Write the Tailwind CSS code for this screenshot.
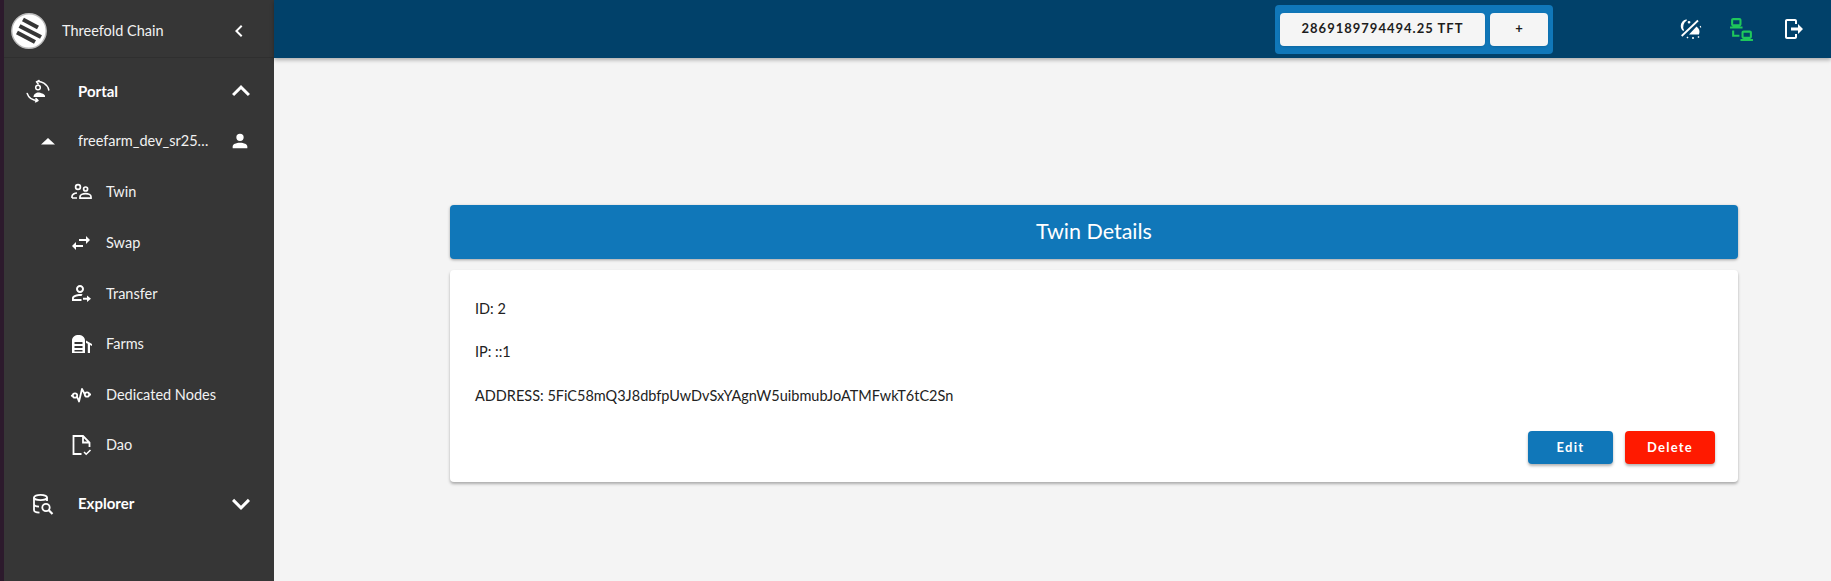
<!DOCTYPE html>
<html>
<head>
<meta charset="utf-8">
<script src="https://cdn.jsdelivr.net/npm/@tailwindcss/browser@4"></script>
</head>
<body class="bg-[#f4f4f4] font-['Lato','Noto_Sans',sans-serif] overflow-hidden">
<div class="flex h-[581px] w-[1831px]">
  <div class="w-[4px] shrink-0 bg-[#2c1a2c]"></div>
  <aside class="w-[270px] shrink-0 bg-[#363636] text-white flex flex-col">
    <div class="h-[58px] flex items-center border-b border-[#2f2f2f] pl-[7px] pr-[23px] pt-[5px]">
      <svg class="w-[36px] h-[36px] shrink-0" viewBox="-18 -18 36 36"><circle cx="0" cy="0" r="17.200" fill="#fff" stroke="#bdbdbd" stroke-width="1.400"/><g stroke="#363636" stroke-width="4.200"><path d="M-6 -11.500L9 -3.500"/><path d="M-9.500 -5L12 6"/><path d="M-12 1.500L6 11"/></g></svg>
      <span class="ml-[15px] text-[14.500px] text-[#f2f2f2]">Threefold Chain</span>
      <svg class="ml-auto w-[24px] h-[24px]" viewBox="0 0 24 24" fill="#fff"><path d="M15.41,16.58L10.83,12L15.41,7.41L14,6L8,12L14,18L15.41,16.58Z"/></svg>
    </div>
    <nav class="pt-[8px] flex flex-col">
      <div class="h-[50px] flex items-center pl-[22px] pr-[15px]">
        <svg class="w-[24px] h-[24px] shrink-0" viewBox="0 0 24 24" fill="none" stroke="#fff" stroke-width="1.500"><circle cx="12" cy="8.500" r="2.300"/><path d="M7.500 18c0-2.800 2.800-4.500 4.800-4.500s6.700 1.700 6.700 3.500v1z" fill="#fff" stroke="none"/><path d="M10.500 2.800C15 1.500 21.500 5 22.800 11M10.500 2.800l2.600-1.300M10.500 2.800l1.700 2.200M1.200 14.500C2.500 18.500 6.500 21.500 12 21.500M12 21.500l-2.500 1.300M12 21.500l-2-2" stroke-linecap="round"/></svg>
        <span class="ml-[28px] text-[15px] font-bold">Portal</span>
        <svg class="ml-auto w-[36px] h-[36px]" viewBox="0 0 24 24" fill="#fff"><path d="M7.41,15.41L12,10.83L16.59,15.41L18,14L12,8L6,14L7.41,15.41Z"/></svg>
      </div>
      <div class="h-[50px] flex items-center pl-[32px] pr-[23px]">
        <svg class="w-[24px] h-[24px] shrink-0" viewBox="0 0 24 24" fill="#fff"><path d="M5,15.500L12,9L19,15.500H5Z"/></svg>
        <span class="ml-[18px] text-[14.500px] text-[#f2f2f2] w-[131px] truncate">freefarm_dev_sr25519</span>
        <svg class="ml-auto w-[22px] h-[22px]" viewBox="0 0 24 24" fill="#fff"><path d="M12,4A4,4 0 0,1 16,8A4,4 0 0,1 12,12A4,4 0 0,1 8,8A4,4 0 0,1 12,4M12,14C16.42,14 20,15.79 20,18V20H4V18C4,15.79 7.58,14 12,14Z"/></svg>
      </div>
      <div class="h-[50.600px] mt-[1px] flex items-center pl-[65px]">
        <svg class="w-[24px] h-[24px] shrink-0" viewBox="0 0 24 24" fill="none" stroke="#fff" stroke-width="1.700"><circle cx="9" cy="7" r="2.400"/><circle cx="16.600" cy="9" r="2"/><path d="M3 18v-1.600C3 14.600 5.500 13 8 13M3 18h5M11 18.200v-1.500c0-1.800 2.800-3 5.600-3s5.400 1.200 5.400 3v1.500z"/></svg>
        <span class="ml-[13px] text-[14.500px] text-[#f2f2f2]">Twin</span>
      </div>
      <div class="h-[50.600px] flex items-center pl-[65px]">
        <svg class="w-[24px] h-[24px] shrink-0" viewBox="0 0 24 24" fill="#fff"><path d="M21,9L17,5V8H10V10H17V13M7,11L3,15L7,19V16H14V14H7V11Z"/></svg>
        <span class="ml-[13px] text-[14.500px] text-[#f2f2f2]">Swap</span>
      </div>
      <div class="h-[50.600px] flex items-center pl-[65px]">
        <svg class="w-[24px] h-[24px] shrink-0" viewBox="0 0 24 24" fill="#fff"><path d="M18 14.500V16.800H14V18.800H18V21L22 17.800L18 14.500M11 4C8.800 4 7 5.800 7 8S8.800 12 11 12 15 10.200 15 8 13.200 4 11 4M11 6C12.100 6 13 6.900 13 8S12.100 10 11 10 9 9.100 9 8 9.900 6 11 6M11 13C8.300 13 3 14.300 3 17V20H12.500V18.100H4.900V17C4.900 16.400 8 14.900 11 14.900C11.500 14.900 12 15 12.500 15L13.600 13.300C12.600 13.100 11.700 13 11 13Z"/></svg>
        <span class="ml-[13px] text-[14.500px] text-[#f2f2f2]">Transfer</span>
      </div>
      <div class="h-[50.600px] flex items-center pl-[65px]">
        <svg class="w-[24px] h-[24px] shrink-0" viewBox="0 0 24 24" fill="#fff"><path d="M3 21V8.500C3 5 6 3 9.500 3s6.500 2 6.500 5.500V21H3zM5.500 10v2h8v-2h-8zM5.500 14v2h8v-2h-8zM5.500 18v1.500h8V18h-8z" fill-rule="evenodd"/><path d="M17 8.500L23 12v2l-2-1V21h-2.200v-9.200L17 11z"/></svg>
        <span class="ml-[13px] text-[14.500px] text-[#f2f2f2]">Farms</span>
      </div>
      <div class="h-[50.600px] flex items-center pl-[65px]">
        <svg class="w-[24px] h-[24px] shrink-0" viewBox="0 0 24 24" fill="none" stroke="#fff" stroke-width="1.800"><circle cx="6" cy="12.500" r="2.200"/><circle cx="18" cy="11.500" r="2.200"/><path d="M8 13.500L10 18.500L13 6L15.800 11.200" stroke-linejoin="round"/><path d="M2 12.800L3.800 12.500M20.200 11.500H22"/></svg>
        <span class="ml-[13px] text-[14.500px] text-[#f2f2f2]">Dedicated Nodes</span>
      </div>
      <div class="h-[50.600px] flex items-center pl-[65px]">
        <svg class="w-[24px] h-[24px] shrink-0" viewBox="0 0 24 24" fill="none" stroke="#fff" stroke-width="1.800"><path d="M12.500 21H4.500V3H14L20.500 9.500V14M14 3v6.500h6.500"/><path d="M15 19l2.200 2.200L21.500 17" stroke-width="1.600"/></svg>
        <span class="ml-[13px] text-[14.500px] text-[#f2f2f2]">Dao</span>
      </div>
      <div class="h-[50px] mt-[8px] flex items-center pl-[27px] pr-[15px]">
        <svg class="w-[24px] h-[24px] shrink-0" viewBox="0 0 24 24" fill="none" stroke="#fff" stroke-width="1.800"><ellipse cx="9.500" cy="5.500" rx="6.500" ry="2.700"/><path d="M3 5.500V18c0 1.500 2.500 2.500 5.500 2.700M3 12c0 1.500 2 2.500 5 2.700M16 5.500v3.500"/><circle cx="15" cy="15.500" r="3.700"/><path d="M17.800 18.300L21.500 22" stroke-width="2.200"/></svg>
        <span class="ml-[23px] text-[15px] font-bold">Explorer</span>
        <svg class="ml-auto w-[36px] h-[36px]" viewBox="0 0 24 24" fill="#fff"><path d="M7.41,8.58L12,13.17L16.59,8.58L18,10L12,16L6,10L7.41,8.58Z"/></svg>
      </div>
    </nav>
  </aside>
  <div class="flex-1 flex flex-col min-w-0">
    <header class="h-[58px] shrink-0 bg-[#01416a] shadow-[0_2px_4px_rgba(0,0,0,0.3)] flex items-center relative">
      <div class="ml-[1001px] w-[278px] h-[49px] bg-[#1077b9] rounded-[4px] flex items-center gap-[5px] pl-[5px]">
        <button class="w-[205px] h-[33px] bg-[#f5f5f5] rounded-[4px] shadow-sm text-[13px] font-bold tracking-[1px] text-[#1d1d1d]">2869189794494.25 TFT</button>
        <button class="w-[58px] h-[33px] bg-[#f5f5f5] rounded-[4px] shadow-sm text-[13px] font-bold text-[#1d1d1d]">+</button>
      </div>
      <svg class="ml-[125px] w-[24px] h-[24px]" viewBox="0 0 24 24" fill="none" stroke="#fff" stroke-width="1.800"><path d="M8.500 3a6 6 0 0 0-3 10.500A8 8 0 0 1 8.500 3z" fill="#fff" stroke-width="1.200"/><path d="M3.700 19L20 3.500"/><path d="M18.500 9.500L11 17.500H21a7 7 0 0 0-2.500-8z" fill="#fff" stroke="none"/><path d="M11 4v2.500M9.800 5.300h2.500M15 20v2M22 10l1-.5M10 20l-1 1M20 19.500l1 1" stroke-width="1.500"/></svg>
      <svg class="ml-[27px] w-[25px] h-[25px]" viewBox="0 0 24 24" fill="#1fc75b"><path d="M4,1C2.89,1 2,1.89 2,3V7C2,8.11 2.89,9 4,9H1V11H13V9H10C11.11,9 12,8.11 12,7V3C12,1.89 11.11,1 10,1H4M4,3H10V7H4V3M3,13V18L3,19H10V17H5V13H3M14,13C12.89,13 12,13.89 12,15V19C12,20.11 12.89,21 14,21H11V23H23V21H20C21.11,21 22,20.11 22,19V15C22,13.89 21.11,13 20,13H14M14,15H20V19H14V15Z"/></svg>
      <svg class="ml-[27px] w-[24px] h-[24px]" viewBox="0 0 24 24" fill="#fff"><path d="M22 12L17 7V10.500H10V13.500H17V17M4 20V4C4 2.900 4.900 2 6 2H14C15.100 2 16 2.900 16 4V7H14V4H6V20H14V17H16V20C16 21.100 15.100 22 14 22H6C4.900 22 4 21.100 4 20Z"/></svg>
    </header>
    <main class="pt-[147px] pl-[176px] w-[1464px]">
      <div class="h-[54px] bg-[#1077b9] rounded-[4px] shadow-[0_1px_3px_rgba(0,0,0,0.35)] flex items-center justify-center text-white text-[21.500px] pb-[2px]">Twin Details</div>
      <section class="mt-[11px] h-[212px] bg-white rounded-[4px] shadow-[0_2px_3px_rgba(0,0,0,0.3)] px-[25px] pt-[28px] flex flex-col text-[14.500px] text-[#222]">
        <p class="h-[22px] leading-[22px]">ID: 2</p>
        <p class="h-[22px] leading-[22px] mt-[21px]">IP: ::1</p>
        <p class="h-[22px] leading-[22px] mt-[22px]">ADDRESS: 5FiC58mQ3J8dbfpUwDvSxYAgnW5uibmubJoATMFwkT6tC2Sn</p>
        <div class="flex justify-end gap-[12px] mt-[24px] -mr-[2px]">
          <button class="w-[85px] h-[33px] bg-[#1077b9] rounded-[4px] shadow-[0_2px_3px_rgba(0,0,0,0.3)] text-white text-[13px] font-bold tracking-[1.250px]">Edit</button>
          <button class="w-[90px] h-[33px] bg-[#ff1a00] rounded-[4px] shadow-[0_2px_3px_rgba(0,0,0,0.3)] text-white text-[13px] font-bold tracking-[1.250px]">Delete</button>
        </div>
      </section>
    </main>
  </div>
</div>
</body>
</html>
